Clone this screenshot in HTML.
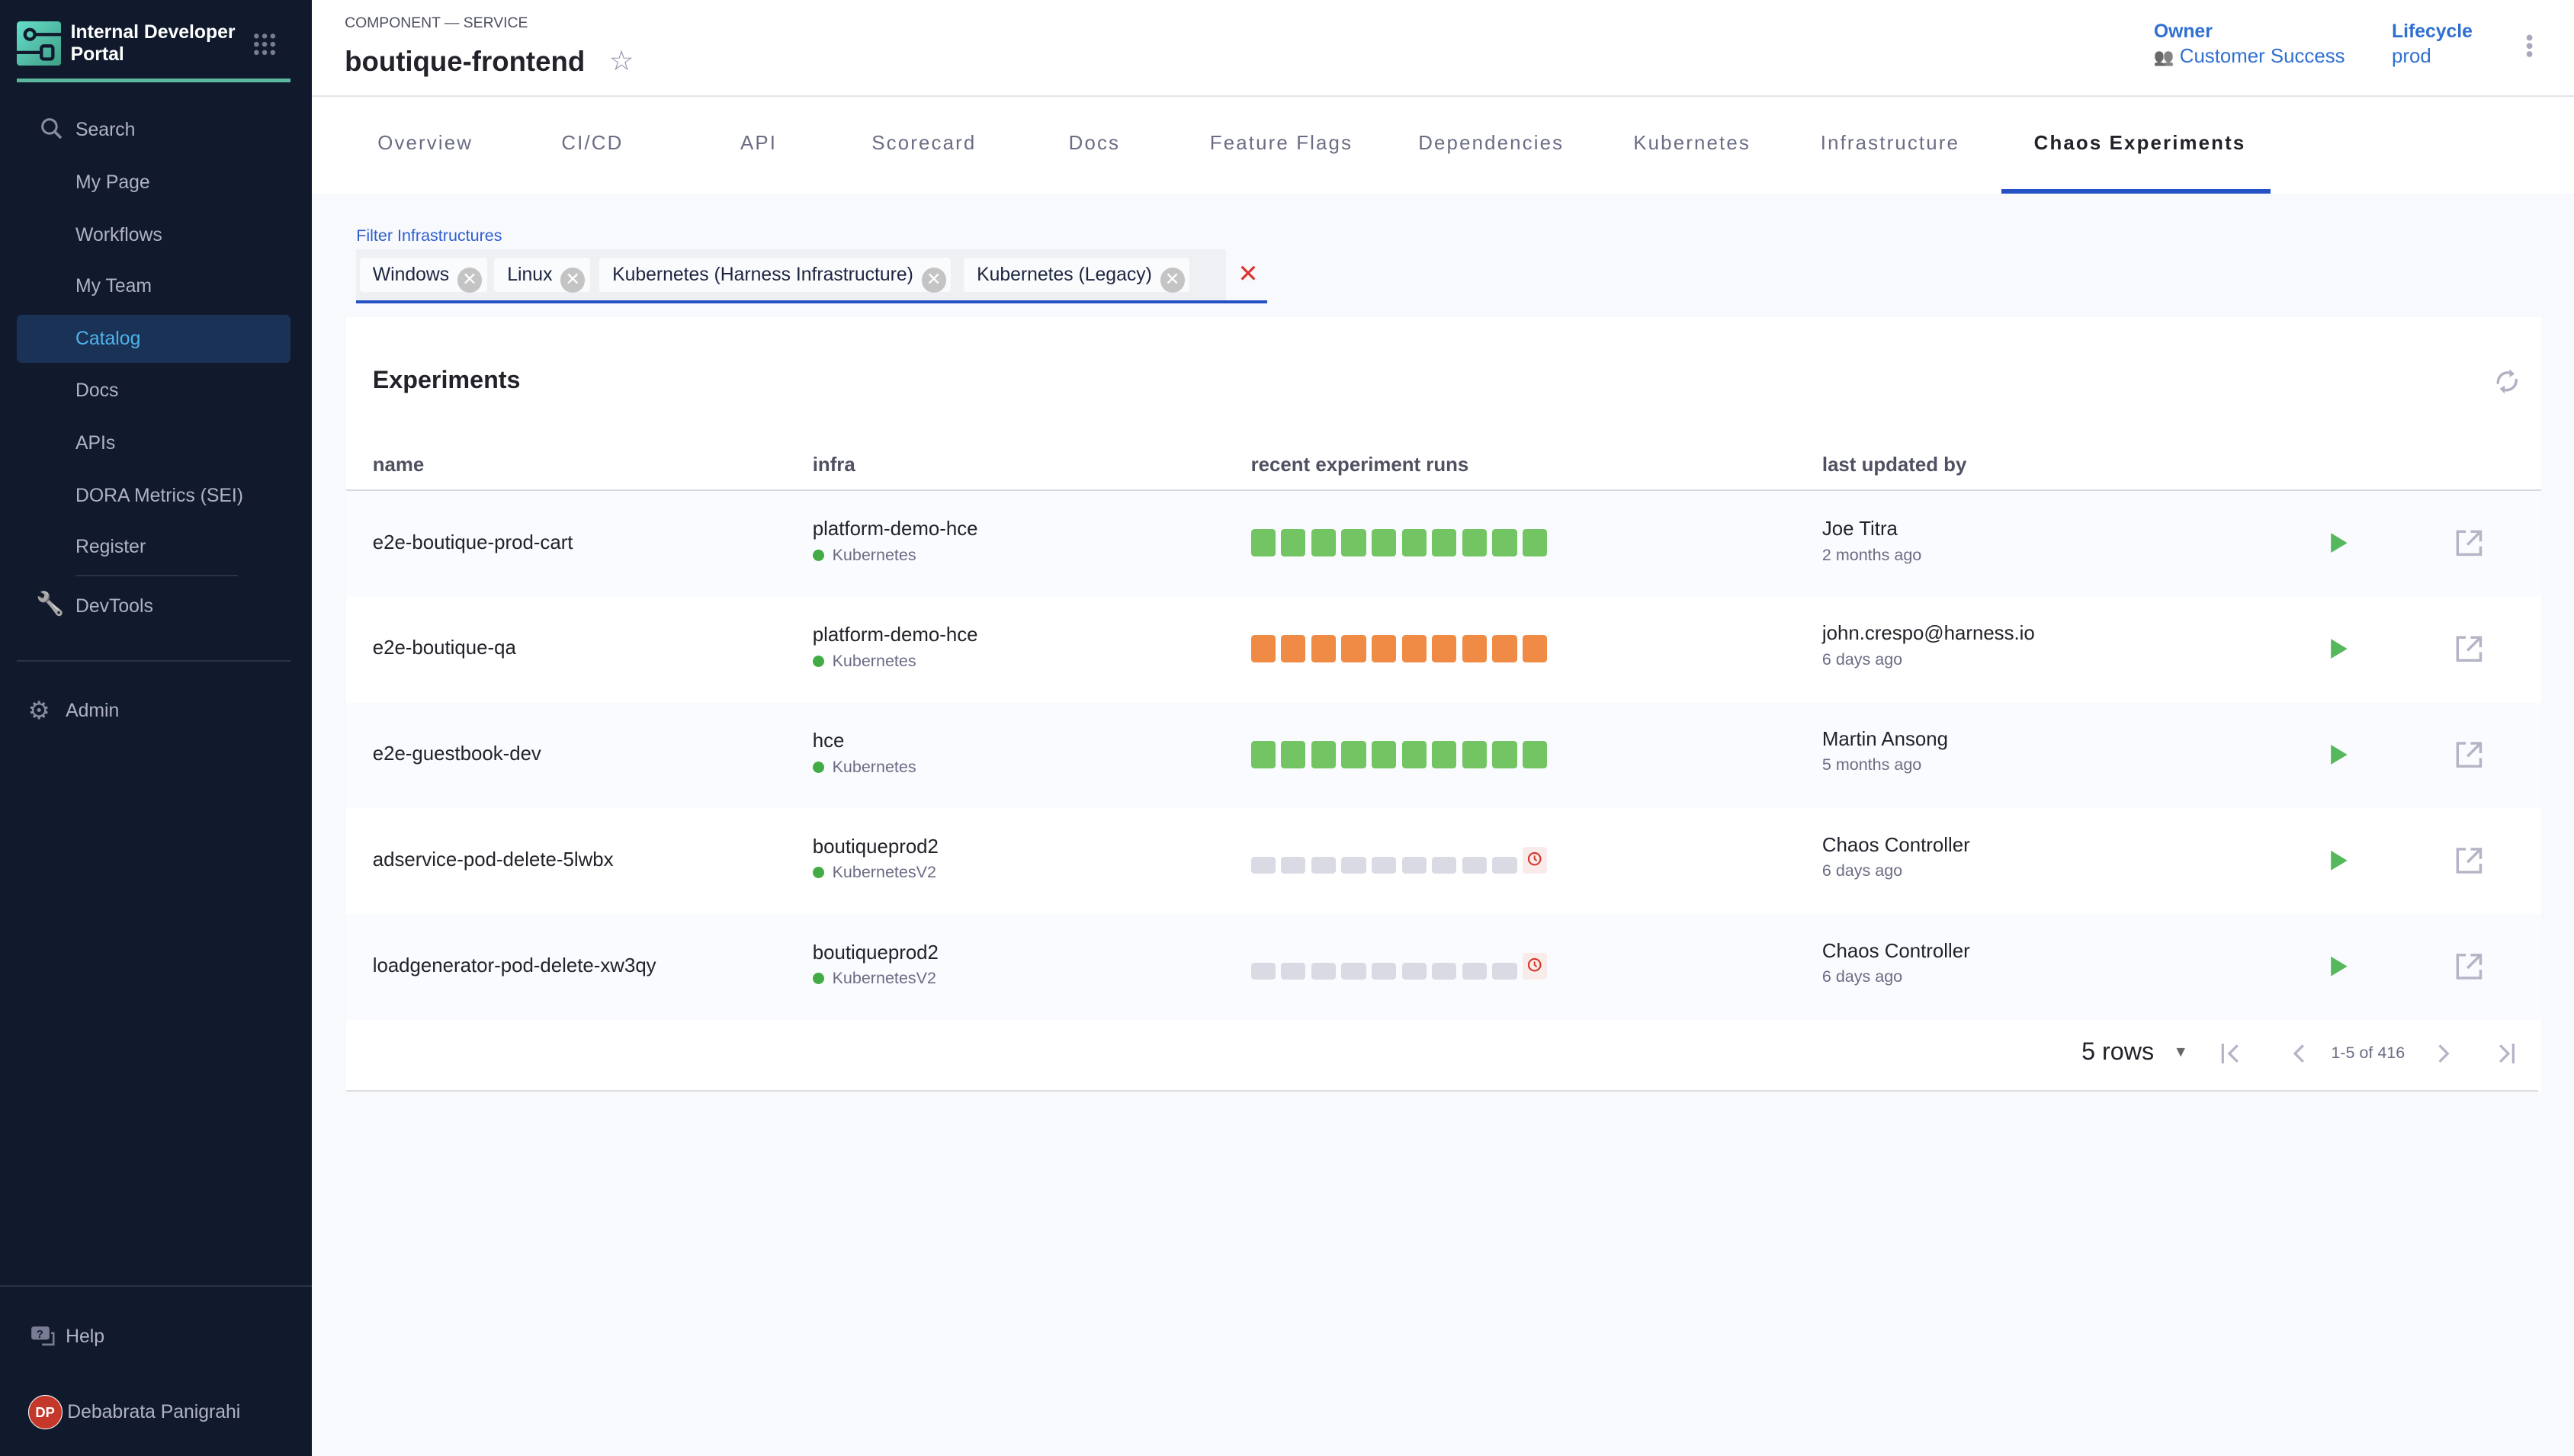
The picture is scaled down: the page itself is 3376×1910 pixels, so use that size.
<!DOCTYPE html>
<html><head><meta charset="utf-8"><style>
html{zoom:2.15306}
body{margin:0;width:1568px;height:887px;position:relative;overflow:hidden;background:#f8f9fc;font-family:"Liberation Sans",sans-serif;color:#22222a}
.a{position:absolute}
#sb{left:0;top:0;width:190px;height:887px;background:#111a2d}
.nav{position:absolute;left:46px;font-size:11.5px;color:#b0b1c4;margin-top:1px}
.tab{position:absolute;top:81px;font-size:12px;letter-spacing:1px;color:#6b6d85}
.row{position:absolute;left:211px;width:1337px;height:64.5px}
.nm{position:absolute;left:16px;font-size:12px;color:#22222a}
.inf{position:absolute;left:284px;font-size:12px;color:#22222a}
.sub{font-size:10px;color:#6b6d85;margin-top:3px}
.dot{display:inline-block;width:7px;height:7px;border-radius:50%;background:#42ab45;margin-right:5px;vertical-align:-0.5px}
.bars{position:absolute;left:551px;display:flex;align-items:flex-end;height:17px}
.bars i{display:block;width:15px;height:16.5px;border-radius:2px;margin-right:3.4px}
.g i{background:#72c562}.o i{background:#ef8b44}.y i{background:#d9dae4;height:10.5px}
.usr{position:absolute;left:899px;font-size:12px}
.chip{position:absolute;top:157px;height:21px;background:#fafbfd;border-radius:2px;font-size:11.5px;color:#1d2540;line-height:21px;padding-left:8px}
.x{display:inline-block;width:15px;height:15px;border-radius:50%;background:#c4c4c4;color:#fff;font-size:11px;line-height:15px;text-align:center;vertical-align:-3px;margin:0 3px 0 5px}
</style></head><body>
<div id="sb" class="a">
 <svg class="a" style="left:10px;top:13px" width="27" height="27" viewBox="0 0 27 27"><defs><linearGradient id="lg" x1="0" y1="0" x2="1" y2="1"><stop offset="0" stop-color="#66ddc8"/><stop offset="1" stop-color="#3f9e86"/></linearGradient></defs><rect width="27" height="27" rx="2" fill="url(#lg)"/><circle cx="8" cy="8" r="3" fill="none" stroke="#111a2d" stroke-width="2"/><path d="M11 8H27M0 19H15" stroke="#111a2d" stroke-width="2"/><rect x="15" y="15" width="7" height="8" rx="1.5" fill="none" stroke="#111a2d" stroke-width="2"/></svg>
 <div class="a" style="left:43px;top:13px;font-size:11.5px;font-weight:bold;color:#fff;line-height:13.5px">Internal Developer<br>Portal</div>
 <svg class="a" style="left:154px;top:20px" width="14" height="14"><g fill="#7a7c93"><circle cx="2" cy="2" r="1.5"/><circle cx="7" cy="2" r="1.5"/><circle cx="12" cy="2" r="1.5"/><circle cx="2" cy="7" r="1.5"/><circle cx="7" cy="7" r="1.5"/><circle cx="12" cy="7" r="1.5"/><circle cx="2" cy="12" r="1.5"/><circle cx="7" cy="12" r="1.5"/><circle cx="12" cy="12" r="1.5"/></g></svg>
 <div class="a" style="left:10px;top:48px;width:167px;height:2px;background:#5bb89d"></div>
 <svg class="a" style="left:24px;top:71px" width="14" height="14"><circle cx="6" cy="6" r="4.3" fill="none" stroke="#8a8ca3" stroke-width="1.4"/><path d="M9 9L13 13" stroke="#8a8ca3" stroke-width="1.6"/></svg>
 <div class="nav" style="top:72px">Search</div>
 <div class="nav" style="top:104px">My Page</div>
 <div class="nav" style="top:136px">Workflows</div>
 <div class="nav" style="top:167px">My Team</div>
 <div class="a" style="left:10px;top:192px;width:167px;height:29px;background:#1a3255;border-radius:3px"></div>
 <div class="nav" style="top:199px;color:#4fb3ea">Catalog</div>
 <div class="nav" style="top:231px">Docs</div>
 <div class="nav" style="top:263px">APIs</div>
 <div class="nav" style="top:295px">DORA Metrics (SEI)</div>
 <div class="nav" style="top:326px">Register</div>
 <div class="a" style="left:46px;top:350px;width:99px;height:1px;background:#2a3246"></div>
 <div class="a" style="left:22px;top:360px;font-size:14px;color:#8a8ca3;filter:grayscale(1)">🔧</div>
 <div class="nav" style="top:362px">DevTools</div>
 <div class="a" style="left:10px;top:402px;width:167px;height:1px;background:#2a3246"></div>
 <div class="a" style="left:17px;top:424px;font-size:15px;color:#8a8ca3">⚙</div>
 <div class="nav" style="top:426px;left:40px">Admin</div>
 <div class="a" style="left:0;top:783px;width:190px;height:1px;background:#2a3246"></div>
 <svg class="a" style="left:18px;top:807px" width="16" height="14"><rect x="1" y="1" width="11" height="8" rx="1.5" fill="#7a7c93"/><path d="M13 5h1.5v7h-7" fill="none" stroke="#7a7c93" stroke-width="1.2"/><text x="4" y="8" font-size="7" fill="#111a2d" font-weight="bold">?</text></svg>
 <div class="nav" style="top:807px;left:40px">Help</div>
 <div class="a" style="left:17px;top:850px;width:20px;height:20px;border-radius:50%;background:#c4372b;border:0.6px solid #fff;color:#fff;font-size:8.5px;font-weight:bold;text-align:center;line-height:20px">DP</div>
 <div class="nav" style="top:853px;left:41px">Debabrata Panigrahi</div>
</div>
<div class="a" style="left:190px;top:0;width:1378px;height:58px;background:#fff;border-bottom:1px solid #e3e3ea"></div>
<div class="a" style="left:210px;top:9px;font-size:9px;color:#4f5162">COMPONENT — SERVICE</div>
<div class="a" style="left:210px;top:28px;font-size:17px;font-weight:bold;color:#22222a">boutique-frontend</div>
<div class="a" style="left:371px;top:27px;font-size:17px;color:#8a8ca3">☆</div>
<div class="a" style="left:1312px;top:13px;font-size:11.5px;font-weight:bold;color:#2f6fd0">Owner</div>
<div class="a" style="left:1312px;top:28px;font-size:12px;color:#2f6fd0"><span style="color:#555;font-size:10px;filter:grayscale(1)">👥</span> Customer Success</div>
<div class="a" style="left:1457px;top:13px;font-size:11.5px;font-weight:bold;color:#2f6fd0">Lifecycle</div>
<div class="a" style="left:1457px;top:28px;font-size:12px;color:#2f6fd0">prod</div>
<svg class="a" style="left:1537px;top:20px" width="8" height="16"><g fill="#a8a9bc"><circle cx="4" cy="3" r="1.8"/><circle cx="4" cy="8" r="1.8"/><circle cx="4" cy="13" r="1.8"/></g></svg>
<div class="a" style="left:190px;top:59px;width:1378px;height:59px;background:#fff"></div>
<div class="tab" style="left:230px">Overview</div>
<div class="tab" style="left:342px">CI/CD</div>
<div class="tab" style="left:451px">API</div>
<div class="tab" style="left:531px">Scorecard</div>
<div class="tab" style="left:651px">Docs</div>
<div class="tab" style="left:737px">Feature Flags</div>
<div class="tab" style="left:864px">Dependencies</div>
<div class="tab" style="left:995px">Kubernetes</div>
<div class="tab" style="left:1109px">Infrastructure</div>
<div class="tab" style="left:1239px;color:#22222a;font-weight:bold">Chaos Experiments</div>
<div class="a" style="left:1219px;top:115px;width:164px;height:3px;background:#2452c5"></div>
<div class="a" style="left:217px;top:138px;font-size:10px;color:#2f5fd0">Filter Infrastructures</div>
<div class="a" style="left:217px;top:152px;width:530px;height:31px;background:#eff0f3"></div>
<div class="a" style="left:217px;top:183px;width:555px;height:2px;background:#2452c5"></div>
<div class="chip" style="left:219px">Windows<span class="x">✕</span></div>
<div class="chip" style="left:301px">Linux<span class="x">✕</span></div>
<div class="chip" style="left:365px">Kubernetes (Harness Infrastructure)<span class="x">✕</span></div>
<div class="chip" style="left:587px">Kubernetes (Legacy)<span class="x">✕</span></div>
<div class="a" style="left:754px;top:158px;font-size:15px;color:#d33">✕</div>
<div class="a" style="left:211px;top:193px;width:1337px;height:472px;background:#fff"></div>
<div class="a" style="left:227px;top:223px;font-size:15px;font-weight:bold;color:#22222a">Experiments</div>
<svg class="a" style="left:1519px;top:224px" width="17" height="17" viewBox="0 0 17 17"><path d="M3 10A6 6 0 0 1 12 4M14 7A6 6 0 0 1 5 13" fill="none" stroke="#b0b1c4" stroke-width="1.6"/><path d="M10 1l3 3-3 2zM7 16l-3-3 3-2z" fill="#b0b1c4"/></svg>
<div class="a" style="left:227px;top:277px;font-size:12px;font-weight:bold;color:#4f5162">name</div>
<div class="a" style="left:495px;top:277px;font-size:12px;font-weight:bold;color:#4f5162">infra</div>
<div class="a" style="left:762px;top:277px;font-size:12px;font-weight:bold;color:#4f5162">recent experiment runs</div>
<div class="a" style="left:1110px;top:277px;font-size:12px;font-weight:bold;color:#4f5162">last updated by</div>
<div class="a" style="left:211px;top:298px;width:1337px;height:1px;background:#d9dae0"></div>

<div class="row" style="top:299px;background:#fafbfe">
 <div class="nm" style="top:25px">e2e-boutique-prod-cart</div>
 <div class="inf" style="top:17px">platform-demo-hce<div class="sub"><span class="dot"></span>Kubernetes</div></div>
 <div class="bars g" style="top:23px"><i></i><i></i><i></i><i></i><i></i><i></i><i></i><i></i><i></i><i></i></div>
 <div class="usr" style="top:17px">Joe Titra<div class="sub">2 months ago</div></div>
</div>
<div class="row" style="top:363.5px;background:#fff">
 <div class="nm" style="top:25px">e2e-boutique-qa</div>
 <div class="inf" style="top:17px">platform-demo-hce<div class="sub"><span class="dot"></span>Kubernetes</div></div>
 <div class="bars o" style="top:23px"><i></i><i></i><i></i><i></i><i></i><i></i><i></i><i></i><i></i><i></i></div>
 <div class="usr" style="top:16px">john.crespo@harness.io<div class="sub">6 days ago</div></div>
</div>
<div class="row" style="top:428px;background:#fafbfe">
 <div class="nm" style="top:25px">e2e-guestbook-dev</div>
 <div class="inf" style="top:17px">hce<div class="sub"><span class="dot"></span>Kubernetes</div></div>
 <div class="bars g" style="top:23px"><i></i><i></i><i></i><i></i><i></i><i></i><i></i><i></i><i></i><i></i></div>
 <div class="usr" style="top:16px">Martin Ansong<div class="sub">5 months ago</div></div>
</div>
<div class="row" style="top:492.5px;background:#fff">
 <div class="nm" style="top:25px">adservice-pod-delete-5lwbx</div>
 <div class="inf" style="top:17px">boutiqueprod2<div class="sub"><span class="dot"></span>KubernetesV2</div></div>
 <div class="bars y" style="top:23px"><i></i><i></i><i></i><i></i><i></i><i></i><i></i><i></i><i></i><i style="background:#f9ebea;height:16.5px;position:relative"><svg class="a" style="left:3px;top:3px" width="9" height="9"><circle cx="4.5" cy="4.5" r="3.6" fill="none" stroke="#d33a2c" stroke-width="1"/><path d="M4.5 2.5v2l1.3 1.2" fill="none" stroke="#d33a2c" stroke-width="0.9"/></svg></i></div>
 <div class="usr" style="top:16px">Chaos Controller<div class="sub">6 days ago</div></div>
</div>
<div class="row" style="top:557px;background:#fafbfe">
 <div class="nm" style="top:25px">loadgenerator-pod-delete-xw3qy</div>
 <div class="inf" style="top:17px">boutiqueprod2<div class="sub"><span class="dot"></span>KubernetesV2</div></div>
 <div class="bars y" style="top:23px"><i></i><i></i><i></i><i></i><i></i><i></i><i></i><i></i><i></i><i style="background:#f9ebea;height:16.5px;position:relative"><svg class="a" style="left:3px;top:3px" width="9" height="9"><circle cx="4.5" cy="4.5" r="3.6" fill="none" stroke="#d33a2c" stroke-width="1"/><path d="M4.5 2.5v2l1.3 1.2" fill="none" stroke="#d33a2c" stroke-width="0.9"/></svg></i></div>
 <div class="usr" style="top:16px">Chaos Controller<div class="sub">6 days ago</div></div>
</div>

<svg class="a" style="left:1419px;top:323px" width="12" height="275">
 <g fill="#56b85c"><path d="M1 2L11 8L1 14z"/><path d="M1 66.5L11 72.5L1 78.5z"/><path d="M1 131L11 137L1 143z"/><path d="M1 195.5L11 201.5L1 207.5z"/><path d="M1 260L11 266L1 272z"/></g>
</svg>
<svg class="a" style="left:1495px;top:322px" width="20" height="280"><g fill="none" stroke="#b3b4c6" stroke-width="1.6">
 <path d="M7 2H2v14h14v-5M10 2h6v6M16 2L8 10"/>
 <path d="M7 66.5H2v14h14v-5M10 66.5h6v6M16 66.5L8 74.5"/>
 <path d="M7 131H2v14h14v-5M10 131h6v6M16 131L8 139"/>
 <path d="M7 195.5H2v14h14v-5M10 195.5h6v6M16 195.5L8 203.5"/>
 <path d="M7 260H2v14h14v-5M10 260h6v6M16 260L8 268"/>
</g></svg>

<div class="a" style="left:1268px;top:632px;font-size:15px;color:#22222a">5 rows</div>
<div class="a" style="left:1324px;top:636px;font-size:9px;color:#666">▼</div>
<svg class="a" style="left:1352px;top:635px" width="180" height="14"><g fill="none" stroke="#b3b4c6" stroke-width="1.5"><path d="M2 1v12M11 2L6 7l5 5"/><path d="M51 2L46 7l5 5"/><path d="M134 2l5 5-5 5"/><path d="M171 2l5 5-5 5M179 1v12"/></g></svg>
<div class="a" style="left:1420px;top:636px;font-size:10px;color:#6b6d85">1-5 of 416</div>
<div class="a" style="left:211px;top:664px;width:1335px;height:1px;background:#dcdce2"></div>
</body></html>
